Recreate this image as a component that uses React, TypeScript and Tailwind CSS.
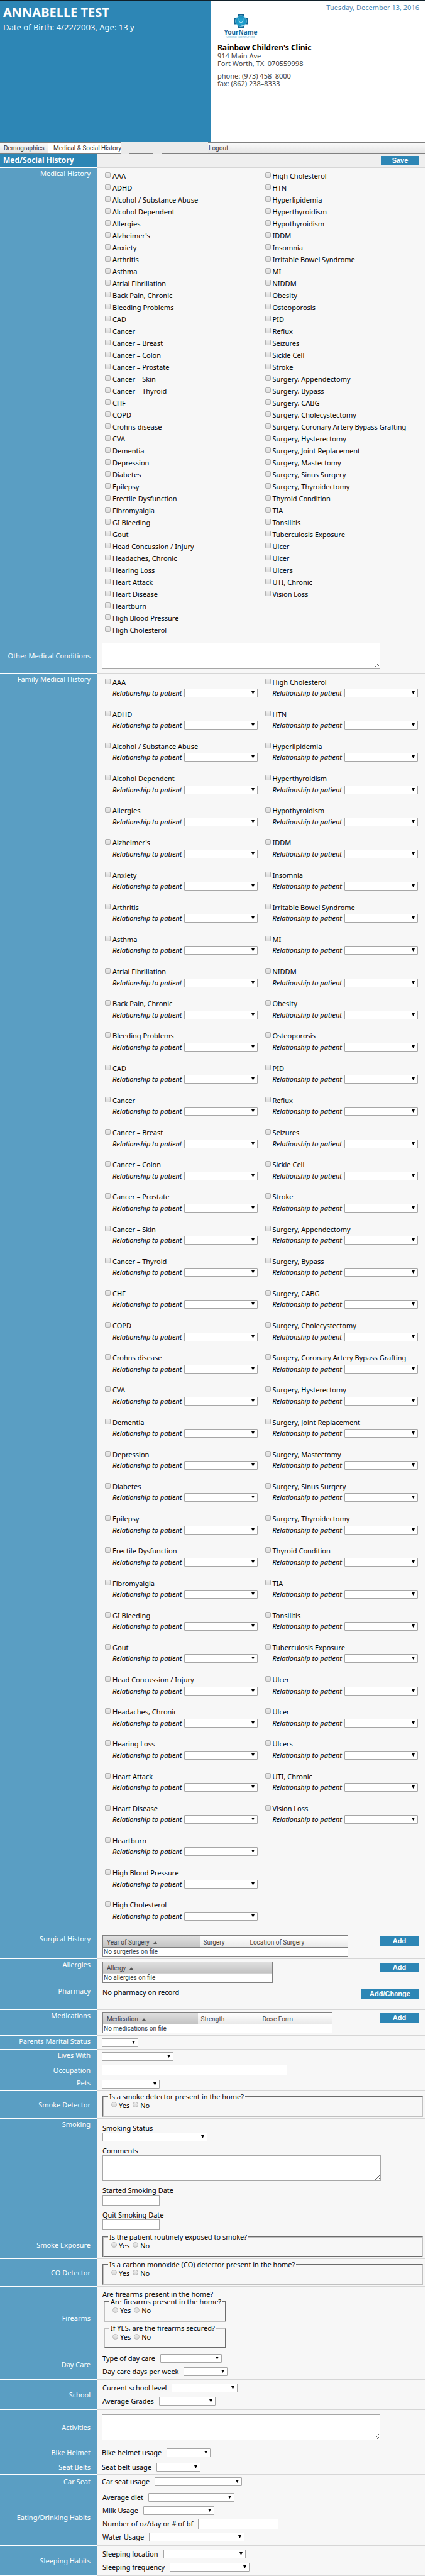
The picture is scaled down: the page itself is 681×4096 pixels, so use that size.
import { useId, type ReactNode } from 'react';

const leftConditions = [
  'AAA', 'ADHD', 'Alcohol / Substance Abuse', 'Alcohol Dependent', 'Allergies', "Alzheimer's",
  'Anxiety', 'Arthritis', 'Asthma', 'Atrial Fibrillation', 'Back Pain, Chronic', 'Bleeding Problems',
  'CAD', 'Cancer', 'Cancer – Breast', 'Cancer – Colon', 'Cancer – Prostate', 'Cancer – Skin',
  'Cancer – Thyroid', 'CHF', 'COPD', 'Crohns disease', 'CVA', 'Dementia', 'Depression', 'Diabetes',
  'Epilepsy', 'Erectile Dysfunction', 'Fibromyalgia', 'GI Bleeding', 'Gout', 'Head Concussion / Injury',
  'Headaches, Chronic', 'Hearing Loss', 'Heart Attack', 'Heart Disease', 'Heartburn',
  'High Blood Pressure', 'High Cholesterol',
];

const rightConditions = [
  'High Cholesterol', 'HTN', 'Hyperlipidemia', 'Hyperthyroidism', 'Hypothyroidism', 'IDDM', 'Insomnia',
  'Irritable Bowel Syndrome', 'MI', 'NIDDM', 'Obesity', 'Osteoporosis', 'PID', 'Reflux', 'Seizures',
  'Sickle Cell', 'Stroke', 'Surgery, Appendectomy', 'Surgery, Bypass', 'Surgery, CABG',
  'Surgery, Cholecystectomy', 'Surgery, Coronary Artery Bypass Grafting', 'Surgery, Hysterectomy',
  'Surgery, Joint Replacement', 'Surgery, Mastectomy', 'Surgery, Sinus Surgery',
  'Surgery, Thyroidectomy', 'Thyroid Condition', 'TIA', 'Tonsilitis', 'Tuberculosis Exposure', 'Ulcer',
  'Ulcer', 'Ulcers', 'UTI, Chronic', 'Vision Loss',
];

function Select({ width, id, label }: { width: string; id?: string; label?: string }) {
  return (
    <span className={`relative inline-block h-[14px] shrink-0 ${width}`}>
      <select
        id={id}
        aria-label={label}
        className="block h-full w-full appearance-none rounded-[1px] border border-[#a6a6a6] bg-white"
      >
        <option value=""></option>
      </select>
      <svg viewBox="0 0 5 5" className="pointer-events-none absolute top-[4px] right-[5px] h-[5px] w-[5px]">
        <path d="M0 0h5L2.5 5z" fill="#000" />
      </svg>
    </span>
  );
}

function CheckBox({ label }: { label: string }) {
  return (
    <label className="flex h-[19px] items-center gap-[3px] whitespace-nowrap">
      <input
        type="checkbox"
        className="mb-[3px] h-[9px] w-[9px] shrink-0 appearance-none rounded-[2px] border border-[#b0b0b0] bg-linear-to-b from-[#eeeeee] to-[#dcdcdc]"
      />
      {label}
    </label>
  );
}

function FamilyItem({ label }: { label: string }) {
  const id = useId();
  return (
    <div>
      <CheckBox label={label} />
      <div className="flex h-4 items-center pl-3">
        <label htmlFor={id} className="w-[114px] whitespace-nowrap italic">
          Relationship to patient
        </label>
        <Select id={id} width="w-[117px]" />
      </div>
    </div>
  );
}

function Row({
  label,
  height,
  top = false,
  children,
}: {
  label: string;
  height: string;
  top?: boolean;
  children: ReactNode;
}) {
  return (
    <div className={`flex ${height}`}>
      <div
        className={`flex w-[154px] shrink-0 justify-end border-b border-white bg-[#5a9ec3] pr-[10px] text-white ${
          top ? 'items-start pt-px' : 'items-center'
        }`}
      >
        {label}
      </div>
      <div className="flex min-w-0 flex-1 flex-col justify-center border-b border-[#d6d6d6] bg-[#f7f7f7]">
        {children}
      </div>
    </div>
  );
}

function YesNo({ legend, className }: { legend: string; className: string }) {
  const name = useId();
  return (
    <fieldset className={`h-[38px] border-2 border-[#c0c0c0] [border-style:groove] pl-3 ${className}`}>
      <legend className="-ml-[5px] h-3 px-[2px] leading-3">{legend}</legend>
      <div className="flex h-4 items-center gap-[5px]">
        {['Yes', 'No'].map((v) => (
          <label key={v} className="flex items-center gap-[3px]">
            <input
              type="radio"
              name={name}
              className="mb-[2px] h-[9px] w-[9px] appearance-none rounded-full border border-[#b5b5b5] bg-linear-to-b from-[#eeeeee] to-[#d8d8d8]"
            />
            {v}
          </label>
        ))}
      </div>
    </fieldset>
  );
}

function Field({ label, width, input = false }: { label: string; width: string; input?: boolean }) {
  const id = useId();
  return (
    <div className="flex h-[21px] items-center gap-2">
      <label htmlFor={id} className="whitespace-nowrap">{label}</label>
      {input ? (
        <input id={id} type="text" className={`h-[17px] border border-[#a6a6a6] bg-white ${width}`} />
      ) : (
        <Select id={id} width={width} />
      )}
    </div>
  );
}

function Stacked({ label, children }: { label: string; children: (id: string) => ReactNode }) {
  const id = useId();
  return (
    <div className="flex flex-col">
      <label htmlFor={id} className="h-[14px] leading-[14px]">{label}</label>
      {children(id)}
    </div>
  );
}

function Button({ children, width = 'w-[61px]' }: { children: ReactNode; width?: string }) {
  return (
    <button
      type="button"
      className={`mt-[2px] h-[15px] bg-[#2d86b5] font-['Liberation_Sans',sans-serif] text-[11px] leading-[15px] font-bold text-white ${width}`}
    >
      {children}
    </button>
  );
}

function DataTable({
  columns,
  empty,
  width,
}: {
  columns: { name: string; width: string }[];
  empty: string;
  width: string;
}) {
  return (
    <table
      className={`table-fixed border-collapse border border-[#808080] bg-white font-['Roboto',sans-serif] text-[10px] leading-3 text-[#444444] ${width}`}
    >
      <thead>
        <tr className="h-[19px] border-b border-[#808080]">
          {columns.map((c, i) => (
            <th
              key={c.name}
              className={`bg-linear-to-b pt-[3px] text-left font-normal whitespace-nowrap ${c.width} ${
                i === 0 ? 'from-[#e0e0e0] to-[#c2c2c2] pl-[6px]' : 'from-white to-[#e8e8e8] pl-[5px]'
              }`}
            >
              {c.name}
              {i === 0 && (
                <svg viewBox="0 0 6 4" className="ml-[6px] inline h-1 w-[6px]">
                  <path d="M3 0l3 4H0z" fill="#555" />
                </svg>
              )}
            </th>
          ))}
        </tr>
      </thead>
      <tbody>
        <tr className="h-[14px]">
          <td colSpan={columns.length} className="p-0 pl-px">{empty}</td>
        </tr>
      </tbody>
    </table>
  );
}

function Logo() {
  return (
    <div className="flex w-[50px] flex-col items-center">
      <svg viewBox="0 0 31 31" className="h-[22px] w-[23px]">
        <defs>
          <radialGradient id="cross">
            <stop offset="0" stopColor="#22b5e0" />
            <stop offset="1" stopColor="#11608f" />
          </radialGradient>
        </defs>
        <path d="M9 0h13v8h9v14h-9v9H9v-9H0V8h9z" fill="url(#cross)" />
        <circle cx="15.5" cy="15" r="12.5" fill="#1fa5d3" fillOpacity=".6" stroke="#a9e0f2" strokeWidth="1" />
        <path
          d="M12 8h-1v5c0 3 2 5 4.500 5s4.500-2 4.500-5V8h-1M15.500 18v3c0 3 2 4 4 4s4 0 5 1"
          fill="none"
          stroke="#e8f8fd"
          strokeWidth="1.200"
        />
      </svg>
      <span className="text-[10px] leading-3 font-bold text-[#1a6797]">YourName</span>
      <span className="text-[4px] leading-[4px] whitespace-nowrap text-[#63b7d8]">Optional Tagline Or Title</span>
    </div>
  );
}

function NavLink({ children, className }: { children: string; className: string }) {
  return (
    <a href="#" className={`flex items-center whitespace-nowrap ${className}`}>
      <span>
        <span className="underline underline-offset-2">{children[0]}</span>
        {children.slice(1)}
      </span>
    </a>
  );
}

export default function App() {
  return (
    <div className="bg-white font-['Noto_Sans',sans-serif] text-[11px] leading-4 text-black">
      <div className="mr-1 border-t border-r border-t-[#10202a] border-r-[#1c1c1f]">
        <header className="flex h-[225px]">
          <div className="w-[336px] shrink-0 bg-[#2d86b5] pt-[6px] pl-[5px] text-white">
            <h1 className="text-[20px] leading-[26px] font-bold">ANNABELLE TEST</h1>
            <p className="pt-[2px] text-[13px] leading-4">Date of Birth: 4/22/2003, Age: 13 y</p>
          </div>
          <div className="flex-1 pt-[3px] pr-[9px] pl-[10px] text-[#444444]">
            <p className="text-right text-[#4a88b5]">Tuesday, December 13, 2016</p>
            <div className="pt-[3px] pl-3">
              <Logo />
            </div>
            <h2 className="pt-2 text-[12px] leading-[14px] font-bold text-black">Rainbow Children's Clinic</h2>
            <p className="leading-3">914 Main Ave</p>
            <p className="leading-3 whitespace-pre">Fort Worth, TX  070559998</p>
            <p className="pt-2 leading-3">phone: (973) 458–8000</p>
            <p className="leading-3">fax: (862) 238–8333</p>
          </div>
        </header>

        <nav className="flex h-[19px] border-y border-[#808080] bg-linear-to-b from-[#fafafa] to-[#e4e4e4] font-['Roboto',sans-serif] text-[10px] text-[#333333]">
          <NavLink className="w-[77px] border-r border-[#999999] pl-[6px]">Demographics</NavLink>
          <NavLink className="w-[116px] bg-white pl-2">Medical & Social History</NavLink>
          <div className="-my-px flex w-[138px] items-end bg-[#ebebeb]">
            <span className="ml-3 h-px w-[38px] bg-[#808080]" />
            <span className="ml-[15px] h-px flex-1 bg-[#808080]" />
          </div>
          <NavLink className="pl-px">Logout</NavLink>
        </nav>

        <main>
          <div className="flex h-[22px]">
            <h2 className="w-[154px] shrink-0 border-b border-white bg-[#2d86b5] pt-px pl-[5px] text-[12px] leading-[18px] font-bold text-white">
              Med/Social History
            </h2>
            <div className="flex flex-1 items-start justify-end border-b border-[#d6d6d6] bg-[#efefef] pt-px pr-[9px]">
              <Button>Save</Button>
            </div>
          </div>

          <Row label="Medical History" height="min-h-[748px]" top>
            <div className="grid grid-cols-2 pl-[13px]">
              <div>{leftConditions.map((c) => <CheckBox key={c} label={c} />)}</div>
              <div>{rightConditions.map((c, i) => <CheckBox key={i} label={c} />)}</div>
            </div>
          </Row>

          <Row label="Other Medical Conditions" height="min-h-[56px]">
            <textarea aria-label="Other Medical Conditions" className="ml-2 h-[41px] w-[443px] border border-[#a6a6a6] bg-white" />
          </Row>

          <Row label="Family Medical History" height="min-h-[2003px]" top>
            <div className="grid flex-1 auto-rows-fr grid-cols-2 pt-1 pb-[2px] pl-[13px]">
              {leftConditions.map((c, i) => [
                <FamilyItem key={`l${i}`} label={c} />,
                rightConditions[i] ? <FamilyItem key={`r${i}`} label={rightConditions[i]} /> : <div key={`r${i}`} />,
              ])}
            </div>
          </Row>

          <Row label="Surgical History" height="min-h-[41px]" top>
            <div className="flex items-start justify-between pr-[10px] pl-[9px]">
              <DataTable
                width="w-[391px]"
                empty="No surgeries on file"
                columns={[
                  { name: 'Year of Surgery', width: 'w-[155px]' },
                  { name: 'Surgery', width: 'w-[74px]' },
                  { name: 'Location of Surgery', width: 'w-auto' },
                ]}
              />
              <Button>Add</Button>
            </div>
          </Row>
          <Row label="Allergies" height="min-h-[42px]" top>
            <div className="flex items-start justify-between pr-[10px] pl-[9px]">
              <DataTable width="w-[271px]" empty="No allergies on file" columns={[{ name: 'Allergy', width: 'w-auto' }]} />
              <Button>Add</Button>
            </div>
          </Row>
          <Row label="Pharmacy" height="min-h-[39px]" top>
            <div className="flex flex-1 items-start justify-between pt-1 pr-[10px] pl-[9px]">
              <p className="leading-[14px]">No pharmacy on record</p>
              <Button width="w-[91px]">Add/Change</Button>
            </div>
          </Row>
          <Row label="Medications" height="min-h-[41px]" top>
            <div className="flex items-start justify-between pr-[10px] pl-[9px]">
              <DataTable
                width="w-[366px]"
                empty="No medications on file"
                columns={[
                  { name: 'Medication', width: 'w-[151px]' },
                  { name: 'Strength', width: 'w-[98px]' },
                  { name: 'Dose Form', width: 'w-auto' },
                ]}
              />
              <Button>Add</Button>
            </div>
          </Row>

          <Row label="Parents Marital Status" height="min-h-[22px]" top>
            <div className="flex pl-2"><Select label="Parents Marital Status" width="w-[58px]" /></div>
          </Row>
          <Row label="Lives With" height="min-h-[22px]" top>
            <div className="flex pl-2"><Select label="Lives With" width="w-[114px]" /></div>
          </Row>
          <Row label="Occupation" height="min-h-[22px]">
            <input aria-label="Occupation" type="text" className="ml-2 h-[17px] w-[295px] border border-[#a6a6a6] bg-white" />
          </Row>
          <Row label="Pets" height="min-h-[22px]" top>
            <div className="flex pl-2"><Select label="Pets" width="w-[92px]" /></div>
          </Row>
          <Row label="Smoke Detector" height="min-h-[44px]">
            <YesNo legend="Is a smoke detector present in the home?" className="mr-[3px] ml-[9px]" />
          </Row>

          <Row label="Smoking" height="min-h-[179px]" top>
            <div className="flex flex-col gap-2 pt-[7px] pl-[9px]">
              <Stacked label="Smoking Status">{(id) => <Select id={id} width="w-[167px]" />}</Stacked>
              <Stacked label="Comments">
                {(id) => <textarea id={id} className="h-[41px] w-[443px] border border-[#a6a6a6] bg-white" />}
              </Stacked>
              <Stacked label="Started Smoking Date">
                {(id) => <input id={id} type="text" className="h-[17px] w-[91px] border border-[#a6a6a6] bg-white" />}
              </Stacked>
              <Stacked label="Quit Smoking Date">
                {(id) => <input id={id} type="text" className="h-[17px] w-[91px] border border-[#a6a6a6] bg-white" />}
              </Stacked>
            </div>
          </Row>

          <Row label="Smoke Exposure" height="min-h-[44px]">
            <YesNo legend="Is the patient routinely exposed to smoke?" className="mr-[3px] ml-[9px]" />
          </Row>
          <Row label="CO Detector" height="min-h-[44px]">
            <YesNo legend="Is a carbon monoxide (CO) detector present in the home?" className="mr-[3px] ml-[9px]" />
          </Row>
          <Row label="Firearms" height="min-h-[101px]">
            <div className="pt-[3px] pl-[9px]">
              <p className="leading-[13px]">Are firearms present in the home?</p>
              <div className="flex flex-col gap-1 pl-[2px]">
                <YesNo legend="Are firearms present in the home?" className="w-[195px]" />
                <YesNo legend="If YES, are the firearms secured?" className="w-[195px]" />
              </div>
            </div>
          </Row>

          <Row label="Day Care" height="min-h-[47px]">
            <div className="pl-[9px]">
              <Field label="Type of day care" width="w-[98px]" />
              <Field label="Day care days per week" width="w-[70px]" />
            </div>
          </Row>
          <Row label="School" height="min-h-[48px]">
            <div className="pl-[9px]">
              <Field label="Current school level" width="w-[105px]" />
              <Field label="Average Grades" width="w-[90px]" />
            </div>
          </Row>
          <Row label="Activities" height="min-h-[56px]">
            <textarea aria-label="Activities" className="ml-2 h-[41px] w-[443px] border border-[#a6a6a6] bg-white" />
          </Row>
          <Row label="Bike Helmet" height="min-h-[24px]">
            <div className="pl-2"><Field label="Bike helmet usage" width="w-[70px]" /></div>
          </Row>
          <Row label="Seat Belts" height="min-h-[23px]">
            <div className="pl-2"><Field label="Seat belt usage" width="w-[70px]" /></div>
          </Row>
          <Row label="Car Seat" height="min-h-[23px]">
            <div className="pl-2"><Field label="Car seat usage" width="w-[139px]" /></div>
          </Row>
          <Row label="Eating/Drinking Habits" height="min-h-[90px]">
            <div className="pl-[9px]">
              <Field label="Average diet" width="w-[137px]" />
              <Field label="Milk Usage" width="w-[113px]" />
              <Field label="Number of oz/day or # of bf" width="w-[128px]" input />
              <Field label="Water Usage" width="w-[152px]" />
            </div>
          </Row>
          <Row label="Sleeping Habits" height="min-h-[48px]">
            <div className="pl-[9px]">
              <Field label="Sleeping location" width="w-[131px]" />
              <Field label="Sleeping frequency" width="w-[127px]" />
            </div>
          </Row>
        </main>
      </div>
    </div>
  );
}
